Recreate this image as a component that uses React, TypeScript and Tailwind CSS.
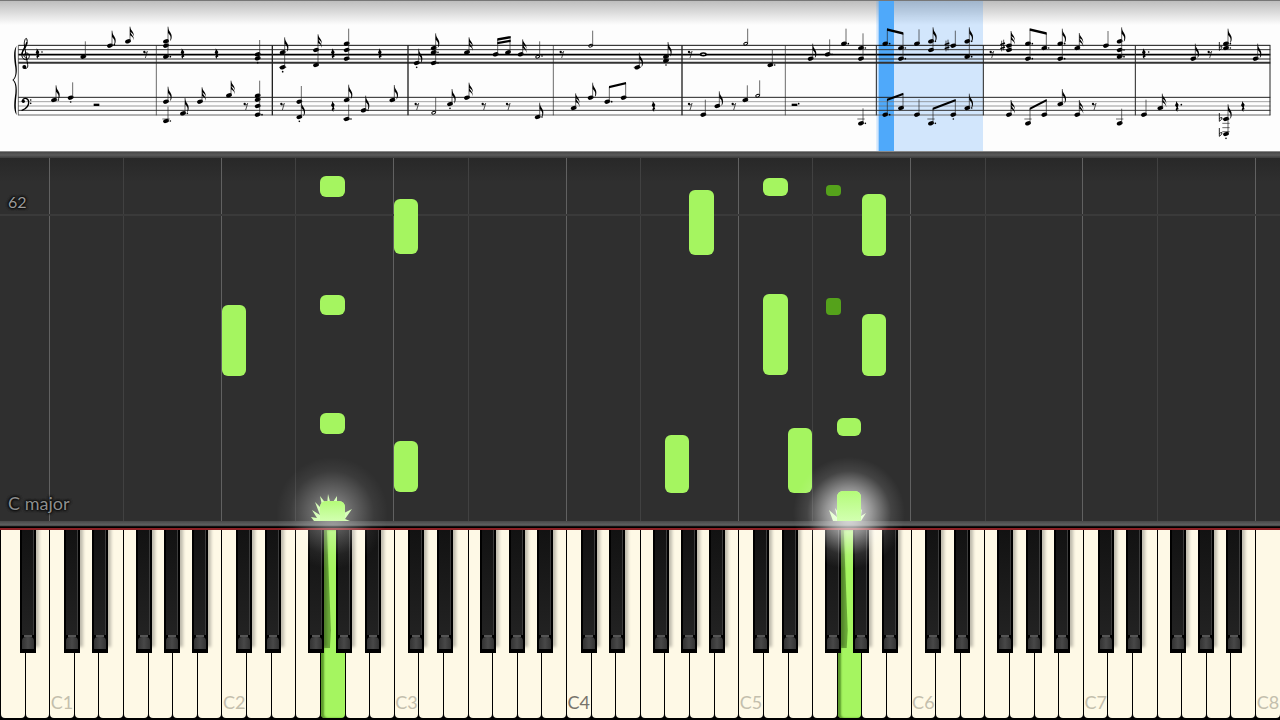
import React from 'react';

const WHITE_KEYS = 52;
const LETTERS = ['A', 'B', 'C', 'D', 'E', 'F', 'G'];
const PRESSED = [13, 34];

// left edge of each black key, in white key widths from the octave's C
const BLACK_KEYS = [
    { name: 'C#', offset: 0.59 },
    { name: 'D#', offset: 1.75 },
    { name: 'F#', offset: 3.52 },
    { name: 'G#', offset: 4.67 },
    { name: 'A#', offset: 5.82 },
];

// start and height are pixels above the hit line
const FALLING = [
    { key: 13, start: 324, height: 21 },
    { key: 13, start: 206, height: 20 },
    { key: 13, start: 87, height: 21 },
    { key: 13, start: 0, height: 20 },
    { key: 16, start: 267, height: 55 },
    { key: 16, start: 29, height: 51 },
    { key: 9, start: 145, height: 71 },
    { key: 28, start: 266, height: 65 },
    { key: 27, start: 28, height: 58 },
    { key: 31, start: 325, height: 18 },
    { key: 31, start: 146, height: 81 },
    { key: 32, start: 28, height: 65 },
    { key: 34, start: 85, height: 18 },
    { key: 34, start: 0, height: 30 },
    { key: 35, start: 265, height: 62 },
    { key: 35, start: 145, height: 62 },
];

const FALLING_SHARP = [
    { key: 33.54, start: 325, height: 11 },
    { key: 33.54, start: 206, height: 17 },
];

type Chord = {
    x: number;
    ys: number[];
    top?: number;
    flags?: number;
    dots?: number[];
    below?: number;
    hollow?: boolean;
    ledgers?: number[];
};

const CHORDS: Chord[] = [
    { x: 250, ys: [170], top: 124 },
    { x: 330, ys: [137], top: 92, flags: 1, dots: [134] },
    { x: 384, ys: [124], top: 80, flags: 2 },
    { x: 498, ys: [124, 137, 170], top: 80, flags: 1, dots: [170] },
    { x: 773, ys: [163, 175], top: 120, below: 188 },
    { x: 848, ys: [157, 202], top: 112, flags: 1, below: 215, ledgers: [202] },
    { x: 948, ys: [150, 195], top: 103, flags: 2 },
    { x: 162, ys: [300], top: 256, flags: 1, dots: [300] },
    { x: 212, ys: [293], top: 247, below: 306 },
    { x: 498, ys: [305], top: 260, flags: 1 },
    { x: 498, ys: [363], top: 320, dots: [363], ledgers: [357] },
    { x: 549, ys: [340], top: 294, flags: 1, dots: [340] },
    { x: 600, ys: [305], top: 262, flags: 2 },
    { x: 687, ys: [286], top: 242, flags: 2 },
    { x: 773, ys: [287, 299, 318, 344], top: 242, dots: [344] },
    { x: 898, ys: [305], top: 258 },
    { x: 898, ys: [351], top: 305, flags: 1, below: 364 },

    { x: 1040, ys: [131, 150, 176], top: 86 },
    { x: 1250, ys: [189], top: 146, flags: 1, below: 202 },
    { x: 1301, ys: [144, 157, 189], top: 100, flags: 1, dots: [157, 189] },
    { x: 1401, ys: [157], top: 112, flags: 2 },
    { x: 1487, ys: [163], top: 118 },
    { x: 1524, ys: [157], top: 111 },
    { x: 1562, ys: [163], top: 118, flags: 2 },
    { x: 1613, ys: [170], top: 124, hollow: true, dots: [168] },
    { x: 1772, ys: [137], top: 92, hollow: true },
    { x: 1912, ys: [202], top: 158, flags: 1, ledgers: [202] },
    { x: 1040, ys: [300], top: 254, flags: 1 },
    { x: 1040, ys: [357], top: 314, dots: [357], ledgers: [357] },
    { x: 1091, ys: [331], top: 287, flags: 1, dots: [331] },
    { x: 1177, ys: [300], top: 255, flags: 1 },
    { x: 1301, ys: [338], top: 292, hollow: true },
    { x: 1350, ys: [312], top: 267, flags: 1, below: 325 },
    { x: 1401, ys: [293], top: 248, flags: 2 },
    { x: 1613, ys: [351], top: 308, flags: 1, dots: [351] },
    { x: 1721, ys: [324], top: 280, flags: 2 },
    { x: 1772, ys: [293], top: 248, flags: 1 },
    { x: 1822, ys: [305], top: 261, dots: [305] },
    { x: 1871, ys: [293], top: 249 },

    { x: 1998, ys: [170, 182], top: 126, flags: 1, below: 195 },
    { x: 2237, ys: [131], top: 86, hollow: true },
    { x: 2311, ys: [195], top: 150, dots: [195] },
    { x: 2432, ys: [176], top: 131, flags: 1 },
    { x: 2483, ys: [163], top: 118, dots: [163] },
    { x: 2532, ys: [131], top: 86, dots: [131] },
    { x: 2583, ys: [144, 176], top: 100, dots: [144] },
    { x: 2656, ys: [131], top: 88, dots: [131] },
    { x: 2703, ys: [144, 176], top: 100, dots: [144, 176] },
    { x: 2751, ys: [131], top: 88 },
    { x: 2793, ys: [124, 150], top: 82, flags: 1, dots: [124] },
    { x: 2860, ys: [137], top: 92 },
    { x: 2110, ys: [344], top: 299 },
    { x: 2152, ys: [318], top: 274, flags: 1 },
    { x: 2236, ys: [300], top: 256 },
    { x: 2273, ys: [287], top: 241, hollow: true },
    { x: 2583, ys: [370], top: 325, dots: [370], ledgers: [357] },
    { x: 2656, ys: [344], top: 299, dots: [344] },
    { x: 2703, ys: [324], top: 281 },
    { x: 2751, ys: [344], top: 298 },
    { x: 2793, ys: [370], top: 326, dots: [370], ledgers: [357] },
    { x: 2860, ys: [344], top: 300, below: 357 },

    { x: 2902, ys: [124, 170], top: 82, flags: 1, dots: [124, 170] },
    { x: 3027, ys: [137, 150], top: 93, flags: 2 },
    { x: 3084, ys: [131, 176], top: 88, dots: [131, 176] },
    { x: 3133, ys: [144], top: 100, dots: [144] },
    { x: 3181, ys: [131, 176], top: 86, flags: 1, dots: [131, 176] },
    { x: 3232, ys: [144], top: 99, flags: 2 },
    { x: 3318, ys: [137], top: 93 },
    { x: 3359, ys: [124, 150, 170], top: 82, flags: 1, dots: [150, 170] },
    { x: 3580, ys: [176], top: 131, flags: 1 },
    { x: 3678, ys: [131, 144], top: 86, flags: 1, dots: [131, 144] },
    { x: 3767, ys: [176], top: 131, flags: 1 },
    { x: 2902, ys: [324], top: 281, flags: 1, dots: [324] },
    { x: 3027, ys: [344], top: 300, flags: 2 },
    { x: 3084, ys: [370], top: 326, ledgers: [357] },
    { x: 3133, ys: [344], top: 300 },
    { x: 3181, ys: [312], top: 267, flags: 1 },
    { x: 3232, ys: [344], top: 300, flags: 2 },
    { x: 3359, ys: [370], top: 326, ledgers: [357] },
    { x: 3432, ys: [344], top: 299 },
    { x: 3481, ys: [324], top: 281, flags: 2 },
    { x: 3678, ys: [357, 402], top: 313, flags: 1, below: 415, ledgers: [357, 370, 383, 395] },
];

// x1, y1, x2, y2
const BEAMS = [
    [1493, 118, 1531, 111],
    [1493, 129, 1531, 122],
    [1828, 261, 1877, 249],
    [2662, 88, 2709, 100],
    [2662, 299, 2709, 281],
    [2799, 326, 2866, 300],
    [3090, 88, 3139, 100],
    [3090, 326, 3139, 300],
];

const QUARTER_RESTS = [
    [114, 160], [549, 160], [651, 160], [1000, 160], [1141, 160], [3433, 160],
    [1000, 318], [1962, 318], [3532, 318], [3730, 318],
];

const EIGHTH_RESTS = [
    [436, 162], [1685, 162], [2070, 162], [2975, 162], [3629, 162],
    [737, 318], [847, 318], [1250, 318], [1451, 318], [1524, 318],
    [2070, 318], [2201, 318], [3282, 318],
];

// x, stroke width
const BAR_LINES = [
    [55, 2], [469, 2], [817, 4], [1224, 4], [1660, 2], [2046, 4],
    [2356, 2], [2629, 3], [2950, 3], [3406, 3], [3810, 3],
];

// y, stroke width, colour
const STAFF_LINES: [number, number, string][] = [
    [136, 3, '#111'], [149, 3, '#333'], [164, 5, '#000'], [177, 3, '#222'], [188, 6, '#333'],
    [292, 3, '#222'], [305, 2, '#777'], [318, 2, '#666'], [331, 3, '#333'], [345, 3, '#666'],
];

function ChordMark({ x, ys, top, flags = 0, dots = [], below, hollow, ledgers = [] }: Chord) {
    const stem = x + 6;
    return (
        <g>
            {ledgers.map((y) => (
                <path key={y} d={`M${x - 11} ${y}h22`} stroke="#222" strokeWidth="2" />
            ))}
            {ys.map((y) => (
                <ellipse
                    key={y}
                    cx={x}
                    cy={y}
                    rx={hollow ? 6 : 9}
                    ry={hollow ? 4 : 6}
                    transform={`rotate(-22 ${x} ${y})`}
                    fill={hollow ? 'none' : '#000'}
                    stroke={hollow ? '#000' : 'none'}
                    strokeWidth="3"
                />
            ))}
            {top && <path d={`M${stem} ${ys[ys.length - 1]}V${top}`} stroke="#222" strokeWidth="2" />}
            {flags === 1 && (
                <path d={`M${stem} ${top}c1 14 12 18 11 31c0 7-3 10-5 13c3-11 3-17-6-25z`} />
            )}
            {flags === 2 && (
                <>
                    <path d={`M${stem} ${top}c1 11 12 13 12 30c-2-9-7-13-12-15z`} />
                    <path d={`M${stem} ${top! + 12}c1 11 12 13 12 29c-2-9-7-13-12-15z`} />
                </>
            )}
            {dots.map((y) => (
                <circle key={y} cx={x + 13} cy={y} r="2.5" />
            ))}
            {below && <circle cx={x} cy={below} r="2.5" />}
        </g>
    );
}

function Sheet() {
    return (
        <header className="bg-[#fdfdfd] bg-linear-to-b from-[#bebebe] to-[#fdfdfd] to-[24px] border-t border-[#777]">
            <svg viewBox="0 3 3840 450" className="block w-full" role="img" aria-label="Sheet music">
                <rect x="2629" y="0" width="320" height="453" fill="#3c96fa" opacity="0.22" />
                <rect x="2636" y="0" width="46" height="453" fill="#4fa9fa" />

                {STAFF_LINES.map(([y, width, color]) => (
                    <path key={y} d={`M55 ${y}H3811`} stroke={color} strokeWidth={width} />
                ))}
                {BAR_LINES.map(([x, width]) => (
                    <path key={x} d={`M${x} 136V346`} stroke="#222" strokeWidth={width} />
                ))}

                {/* brace */}
                <path d="M50 137C38 150 43 180 46 203C48 222 45 234 37 240C45 246 48 260 46 280C43 304 39 330 50 345C46 325 47 305 50 283C52 260 48 246 41 240C48 233 52 220 50 200C47 175 45 152 50 137Z" />

                {/* treble clef */}
                <g fill="none" stroke="#000" strokeLinecap="round">
                    <path d="M72 204C77 209 85 204 83 194L73 135C72 122 77 112 80 116C84 126 80 139 72 148C62 160 64 178 77 179C91 178 91 160 80 159C71 159 69 169 76 173" strokeWidth="3" />
                    <path d="M80 128C79 140 66 148 66 163" strokeWidth="4" />
                </g>
                <circle cx="73" cy="201" r="6" />

                {/* bass clef */}
                <path d="M67 302C70 292 85 292 86 306C87 319 76 327 66 331" fill="none" stroke="#000" strokeWidth="4" strokeLinecap="round" />
                <circle cx="70" cy="304" r="5" />
                <circle cx="92" cy="300" r="2.5" />
                <circle cx="92" cy="310" r="2.5" />

                {CHORDS.map((chord, i) => (
                    <ChordMark key={i} {...chord} />
                ))}
                {BEAMS.map(([x1, y1, x2, y2], i) => (
                    <path key={i} d={`M${x1 - 1} ${y1 - 3}L${x2 + 1} ${y2 - 3}V${y2 + 4}L${x1 - 1} ${y1 + 4}Z`} />
                ))}
                {QUARTER_RESTS.map(([x, y], i) => (
                    <path
                        key={i}
                        d={`M${x - 4} ${y - 15}l8 11q-5 6 0 14q-7-1-3 8q-10-8-3-13l-5-7q5-6 3-13z`}
                    />
                ))}
                {EIGHTH_RESTS.map(([x, y], i) => (
                    <g key={i}>
                        <circle cx={x - 3} cy={y - 6} r="3.5" />
                        <path d={`M${x - 3} ${y - 3}q6 1 9-5l-6 20`} fill="none" stroke="#000" strokeWidth="2" />
                    </g>
                ))}

                {/* half rests */}
                <rect x="281" y="311" width="17" height="7" />
                <rect x="2375" y="311" width="17" height="7" />
                <circle cx="2396" cy="311" r="2.5" />
                <circle cx="126" cy="156" r="2.5" />
                <circle cx="3446" cy="156" r="2.5" />
                <circle cx="3544" cy="314" r="2.5" />

                {/* whole note */}
                <ellipse cx="2110" cy="163" rx="8" ry="4" fill="#fff" stroke="#000" strokeWidth="5" />

                {/* accidentals */}
                {[2841, 3008].map((x) => (
                    <g key={x} stroke="#000">
                        <path d={`M${x - 3} 122v32M${x + 3} 119v32`} strokeWidth="2" />
                        <path d={`M${x - 7} 134l14-5M${x - 7} 146l14-5`} strokeWidth="4" />
                    </g>
                ))}
                {[144, 357, 402].map((y) => (
                    <path
                        key={y}
                        d={`M3658 ${y - 18}V${y + 7}Q3668 ${y} 3666 ${y - 4}Q3663 ${y - 6} 3658 ${y - 1}`}
                        fill="none"
                        stroke="#000"
                        strokeWidth="2.5"
                    />
                ))}
            </svg>
        </header>
    );
}

function Sparks({ tall }: { tall?: boolean }) {
    return (
        <svg viewBox="0 0 44 28" className="w-11 shrink-0" fill="#c5ff98">
            {tall ? (
                <path d="M6 28L2 17L10 24L8 15L14 23L22 28L31 21L35 16L34 23L39 20L34 28Z" />
            ) : (
                <path d="M4 28L1 24L7 25L2 17L10 22L5 9L13 17L10 3L17 12L18 1L21 12L27 3L27 13L32 9L32 21L42 16L35 26L40 28Z" />
            )}
        </svg>
    );
}

function GridLines() {
    return (
        <div className="absolute inset-0 flex overflow-hidden">
            <div className="w-[3.8%] shrink-0" />
            {Array.from({ length: 8 }, (_, i) => (
                <div key={i} className="flex w-[13.4615%] shrink-0 border-l border-[#616161]">
                    <div className="w-3/7" />
                    <div className="w-4/7 border-l border-[#414141]" />
                </div>
            ))}
        </div>
    );
}

function Roll() {
    return (
        <section className="relative flex min-h-[363px] flex-1 flex-col justify-between bg-[#2f2f2f] bg-linear-to-b from-[#282828] to-[#2f2f2f] to-[24px] [text-shadow:0_0_3px_#000,0_0_3px_#000,0_0_3px_#000]">
            <GridLines />
            <div className="relative flex h-[58px] items-end border-b-2 border-[#3a3a3a] px-2 text-base leading-6 text-[#9b9b9b]">
                62
            </div>
            <div className="relative px-2 pb-1 text-lg leading-7 text-[#8e8e8e]">C major</div>

            {FALLING.map((note, i) => (
                <div
                    key={i}
                    className={`absolute w-[1.92%] bg-[#a5f560] ${note.start === 0 ? 'rounded-t-md' : 'rounded-md'}`}
                    style={{ left: `${(note.key / WHITE_KEYS) * 100}%`, bottom: note.start, height: note.height }}
                />
            ))}
            {FALLING_SHARP.map((note, i) => (
                <div
                    key={i}
                    className="absolute w-[1.2%] rounded-sm bg-[#55a21b]"
                    style={{ left: `${(note.key / WHITE_KEYS) * 100}%`, bottom: note.start, height: note.height }}
                />
            ))}

            {PRESSED.map((key, i) => (
                <div
                    key={key}
                    className="pointer-events-none absolute bottom-0 z-20 flex w-[1.92%] items-end justify-center"
                    style={{ left: `${(key / WHITE_KEYS) * 100}%` }}
                >
                    <div
                        className={`absolute -bottom-12 size-28 ${
                            i === 0
                                ? 'bg-[radial-gradient(closest-side,rgba(255,255,255,0.5),rgba(255,255,255,0.25)_40%,rgba(255,255,255,0.06)_75%,transparent)]'
                                : 'bg-[radial-gradient(closest-side,rgba(255,255,255,0.9),rgba(255,255,255,0.5)_40%,rgba(255,255,255,0.1)_75%,transparent)]'
                        }`}
                    />
                    <Sparks tall={i === 1} />
                    <div
                        className={`absolute bottom-0 w-full rounded-t-md bg-linear-to-b from-[#b4fb78] to-[#d2ffb0] ${
                            i === 0 ? 'h-5' : 'h-[30px]'
                        }`}
                    />
                </div>
            ))}
        </section>
    );
}

function WhiteKey({ index }: { index: number }) {
    const letter = LETTERS[index % 7];
    const octave = Math.floor((index + 5) / 7);
    const pressed = PRESSED.includes(index);
    return (
        <button
            aria-label={`${letter}${octave}`}
            className={`relative flex min-w-0 flex-1 items-end justify-center rounded-b pb-1 text-lg leading-6 ${
                pressed
                    ? 'bg-[#a5f560] shadow-[inset_3px_0_2px_#5c9a2c]'
                    : 'bg-[#fef9e6]'
            } ${octave === 4 ? 'text-[#77736a]' : 'text-[#c4bfad]'}`}
        >
            {pressed && (
                <span className="absolute top-0 left-0 h-[118px] w-2.5 bg-[#6bab38] [clip-path:polygon(0_0,60%_0,100%_85%,90%_100%,0_100%)]" />
            )}
            {letter === 'C' && `C${octave}`}
        </button>
    );
}

function BlackKey({ name, left }: { name: string; left: number }) {
    return (
        <button
            aria-label={name}
            className="absolute top-0 flex h-[123px] w-[1.25%] flex-col items-stretch bg-black px-0.5 pb-1 shadow-[3px_-6px_3px_rgba(0,0,0,0.25)]"
            style={{ left: `${(left / WHITE_KEYS) * 100}%` }}
        >
            <span className="flex-1 border-r border-[#3c3c3c] bg-linear-to-b from-[#121212] to-[#222]" />
            <span className="mx-0.5 h-0.5 bg-[#555]" />
            <span className="h-3 rounded-t-sm bg-linear-to-r from-[#333] via-[#484848] to-[#333]" />
        </button>
    );
}

function Keyboard() {
    const blackKeys = Array.from({ length: 8 }, (_, octave) =>
        BLACK_KEYS.map((key) => ({ name: `${key.name}${octave}`, left: octave * 7 - 5 + key.offset }))
    )
        .flat()
        .filter((key) => key.left > 0);

    return (
        <section className="relative overflow-hidden bg-black pb-0.5">
            <div className="flex h-[188px] gap-px pl-px">
                {Array.from({ length: WHITE_KEYS }, (_, i) => (
                    <WhiteKey key={i} index={i} />
                ))}
            </div>
            {blackKeys.map((key) => (
                <BlackKey key={key.name} {...key} />
            ))}
        </section>
    );
}

export default function App() {
    return (
        <main className="flex min-h-screen flex-col overflow-hidden bg-[#2f2f2f] font-[Lato,'Open_Sans',sans-serif]">
            <Sheet />
            <div className="h-[7px] border-t border-[#888] bg-linear-to-b from-[#474747] via-[#5a5a5a] to-[#3c3c3c]" />
            <Roll />
            <div className="h-[9px] border-b-2 border-[#8c1f24] bg-linear-to-b from-[#484848] via-[#606262] via-60% to-black to-90%" />
            <Keyboard />
        </main>
    );
}
